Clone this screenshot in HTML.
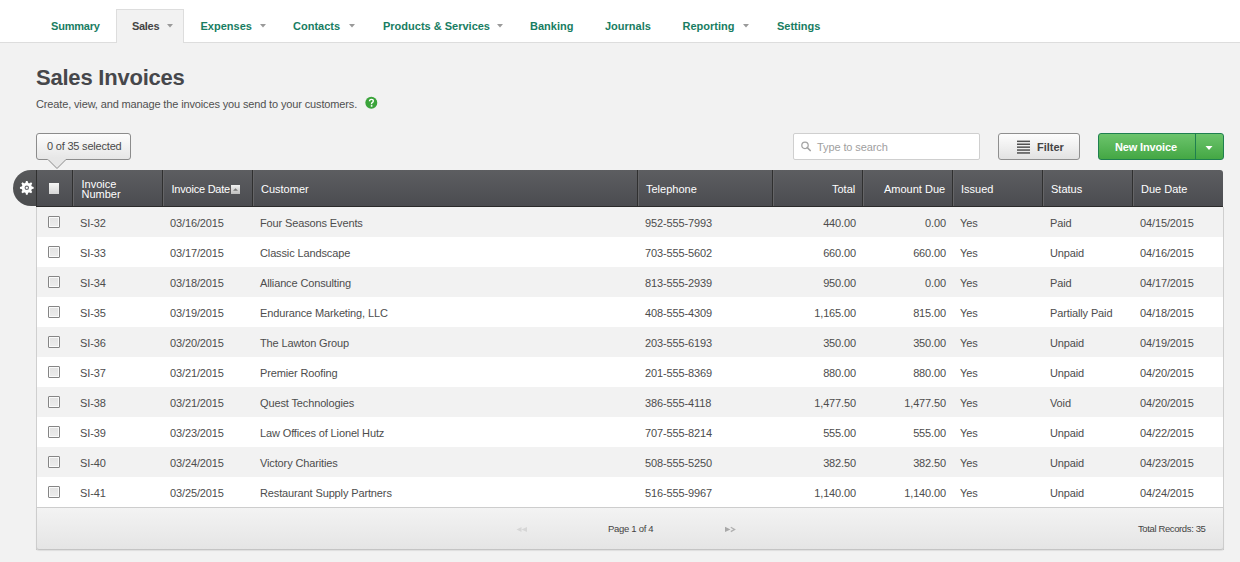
<!DOCTYPE html>
<html><head><meta charset="utf-8">
<style>
*{margin:0;padding:0;box-sizing:border-box}
html,body{width:1240px;height:562px;overflow:hidden;background:#f2f2f2;font-family:"Liberation Sans",sans-serif;color:#444;position:relative}
svg{position:absolute;display:block}
#nav{position:absolute;left:0;top:0;width:1240px;height:43px;background:#fff;border-bottom:1px solid #dddddd}
.nv{position:absolute;top:20px;font-size:11px;font-weight:bold;color:#187d62;white-space:nowrap;line-height:13px}
#tab{position:absolute;left:116px;top:9px;width:68px;height:34px;background:#f2f2f2;border:1px solid #dddddd;border-bottom:none}
h1{position:absolute;left:36px;top:65px;font-size:22px;font-weight:bold;color:#46474b;line-height:26px;white-space:nowrap;letter-spacing:-0.22px}
.sub{position:absolute;left:36px;top:98px;font-size:11px;color:#505050;line-height:13px;white-space:nowrap;letter-spacing:-0.14px}
#tip{position:absolute;left:36px;top:133px;width:95px;height:27px;border:1px solid #8c8c8c;border-radius:3px;background:linear-gradient(#fdfdfd,#e6e6e6);font-size:11px;line-height:13px;padding:6px 0 0 10px;color:#4a4a4a;white-space:nowrap;letter-spacing:-0.2px}
#search{position:absolute;left:793px;top:133px;width:187px;height:27px;border:1px solid #cfcfcf;border-radius:2px;background:#fff}
#search span{position:absolute;left:23px;top:7px;font-size:11px;color:#a0a0a0;line-height:13px;white-space:nowrap;letter-spacing:-0.1px}
#filter{position:absolute;left:998px;top:133px;width:82px;height:27px;border:1px solid #8f8f8f;border-radius:3px;background:linear-gradient(#fdfdfd,#e2e2e2)}
#filter span{position:absolute;left:38px;top:7px;font-size:11px;font-weight:bold;color:#444;line-height:13px}
#newinv{position:absolute;left:1098px;top:133px;width:126px;height:27px;border:1px solid #1f8050;border-radius:3px;background:linear-gradient(#6cc46c,#44a744)}
#newinv span{position:absolute;left:16px;top:7px;font-size:11px;font-weight:bold;color:#fff;line-height:13px;white-space:nowrap;letter-spacing:-0.15px}
#newinv .sp{position:absolute;left:96px;top:0;width:1px;height:25px;background:#1f7f4f}
#thead{position:absolute;left:36px;top:170px;width:1187px;height:37px;background:linear-gradient(#5d5e61,#4b4c50);border-bottom:1px solid #2a2a2a;border-top-right-radius:3px}
.gear{position:absolute;left:13px;top:170px;width:46px;height:36px;border-radius:18px;background:linear-gradient(#58595b,#4b4c4e)}
.hd{position:absolute;top:0;height:36px;width:2px;border-left:1px solid #303030;border-right:1px solid #656567}
.ht{position:absolute;top:13px;font-size:11px;color:#fff;line-height:13px;white-space:nowrap}
#tbody{position:absolute;left:36px;top:207px;width:1188px;height:343px;border-left:1px solid #cfcfcf;border-right:1px solid #cfcfcf}
.row{position:absolute;left:37px;width:1186px;height:30px}
.row .c{position:absolute;top:10px;font-size:11px;line-height:13px;color:#4d4d4d;white-space:nowrap;letter-spacing:-0.13px}
.row .c.r{text-align:right}
.odd{background:#f2f2f2}
.even{background:#fff}
.cb{position:absolute;left:11px;top:9px;width:12px;height:12px;border:1px solid #858585;border-radius:1px;background:linear-gradient(#e2e2e2,#ececec);box-shadow:inset 0 0 0 1px #fafafa}
#foot{position:absolute;left:36px;top:507px;width:1188px;height:43px;border:1px solid #cdcdcd;border-bottom-color:#c4c4c4;background:linear-gradient(#f3f3f3,#e5e5e5);border-radius:0 0 3px 3px;box-shadow:0 1px 1px rgba(0,0,0,0.08)}
.ft{position:absolute;font-size:9.5px;line-height:11px;color:#444;white-space:nowrap;letter-spacing:-0.3px}
</style></head><body>
<div id="nav">
  <div id="tab"></div>
  <span class="nv" style="left:51px;letter-spacing:-0.2px">Summary</span>
  <span class="nv" style="left:132px;color:#444;letter-spacing:-0.3px">Sales</span>
  <span class="nv" style="left:200.5px">Expenses</span>
  <span class="nv" style="left:293px">Contacts</span>
  <span class="nv" style="left:383px">Products &amp; Services</span>
  <span class="nv" style="left:530px">Banking</span>
  <span class="nv" style="left:605px">Journals</span>
  <span class="nv" style="left:682.5px">Reporting</span>
  <span class="nv" style="left:777px">Settings</span>
</div>
<svg style="left:0;top:0" width="1240" height="43">
  <g fill="#9a9a9a">
    <polygon points="167,24 173,24 170,27.5"/>
    <polygon points="260,24 266,24 263,27.5"/>
    <polygon points="349,24 355,24 352,27.5"/>
    <polygon points="497,24 503,24 500,27.5"/>
    <polygon points="743,24 749,24 746,27.5"/>
  </g>
</svg>
<h1>Sales Invoices</h1>
<div class="sub">Create, view, and manage the invoices you send to your customers.</div>
<svg style="left:364px;top:96px" width="15" height="15" viewBox="0 0 15 15">
  <circle cx="7.3" cy="6.8" r="6" fill="#3ba43b"/>
  <path d="M5.5 5.3 Q5.5 3.4 7.4 3.4 Q9.3 3.4 9.3 5.1 Q9.3 6.1 8.2 6.7 Q7.5 7.1 7.5 8.2" fill="none" stroke="#fff" stroke-width="1.4"/>
  <rect x="6.8" y="9.1" width="1.6" height="1.6" fill="#fff"/>
</svg>
<div id="tip">0 of 35 selected</div>
<svg style="left:46px;top:158px" width="24" height="12">
  <polygon points="1,1 20,1 11,10.5" fill="#e7e7e7"/>
  <polyline points="1.5,1 11,10.5 20.5,1" fill="none" stroke="#8c8c8c" stroke-width="1"/>
  <rect x="2" y="0" width="18" height="1.5" fill="#e7e7e7"/>
</svg>
<div id="search"><span>Type to search</span></div>
<svg style="left:798px;top:139px" width="16" height="16">
  <circle cx="7" cy="6.3" r="3.2" fill="none" stroke="#a3a3a3" stroke-width="1.25"/>
  <line x1="9.2" y1="8.5" x2="12.2" y2="11.5" stroke="#a3a3a3" stroke-width="1.7" stroke-linecap="round"/>
</svg>
<div id="filter"><span>Filter</span></div>
<svg style="left:1016px;top:140px" width="15" height="15">
  <g fill="#505050">
    <rect x="1" y="0.6" width="13" height="1.5"/>
    <rect x="1" y="3.5" width="13" height="1.5"/>
    <rect x="1" y="6.4" width="13" height="1.5"/>
    <rect x="1" y="9.3" width="13" height="1.5"/>
    <rect x="1" y="12.2" width="13" height="1.5"/>
  </g>
</svg>
<div id="newinv"><span>New Invoice</span><div class="sp"></div></div>
<svg style="left:1200px;top:140px" width="16" height="16"><polygon points="5.5,6 12.5,6 9,10" fill="#fff"/></svg>

<div id="tbody"></div>
<div class="row odd" style="top:207px"><div class="cb"></div><span class="c" style="left:43px">SI-32</span><span class="c" style="left:133px">03/16/2015</span><span class="c" style="left:223px">Four Seasons Events</span><span class="c" style="left:608px">952-555-7993</span><span class="c r" style="left:735px;width:84px">440.00</span><span class="c r" style="left:825px;width:84px">0.00</span><span class="c" style="left:923px">Yes</span><span class="c" style="left:1013px">Paid</span><span class="c" style="left:1103px">04/15/2015</span></div>
<div class="row even" style="top:237px"><div class="cb"></div><span class="c" style="left:43px">SI-33</span><span class="c" style="left:133px">03/17/2015</span><span class="c" style="left:223px">Classic Landscape</span><span class="c" style="left:608px">703-555-5602</span><span class="c r" style="left:735px;width:84px">660.00</span><span class="c r" style="left:825px;width:84px">660.00</span><span class="c" style="left:923px">Yes</span><span class="c" style="left:1013px">Unpaid</span><span class="c" style="left:1103px">04/16/2015</span></div>
<div class="row odd" style="top:267px"><div class="cb"></div><span class="c" style="left:43px">SI-34</span><span class="c" style="left:133px">03/18/2015</span><span class="c" style="left:223px">Alliance Consulting</span><span class="c" style="left:608px">813-555-2939</span><span class="c r" style="left:735px;width:84px">950.00</span><span class="c r" style="left:825px;width:84px">0.00</span><span class="c" style="left:923px">Yes</span><span class="c" style="left:1013px">Paid</span><span class="c" style="left:1103px">04/17/2015</span></div>
<div class="row even" style="top:297px"><div class="cb"></div><span class="c" style="left:43px">SI-35</span><span class="c" style="left:133px">03/19/2015</span><span class="c" style="left:223px">Endurance Marketing, LLC</span><span class="c" style="left:608px">408-555-4309</span><span class="c r" style="left:735px;width:84px">1,165.00</span><span class="c r" style="left:825px;width:84px">815.00</span><span class="c" style="left:923px">Yes</span><span class="c" style="left:1013px">Partially Paid</span><span class="c" style="left:1103px">04/18/2015</span></div>
<div class="row odd" style="top:327px"><div class="cb"></div><span class="c" style="left:43px">SI-36</span><span class="c" style="left:133px">03/20/2015</span><span class="c" style="left:223px">The Lawton Group</span><span class="c" style="left:608px">203-555-6193</span><span class="c r" style="left:735px;width:84px">350.00</span><span class="c r" style="left:825px;width:84px">350.00</span><span class="c" style="left:923px">Yes</span><span class="c" style="left:1013px">Unpaid</span><span class="c" style="left:1103px">04/19/2015</span></div>
<div class="row even" style="top:357px"><div class="cb"></div><span class="c" style="left:43px">SI-37</span><span class="c" style="left:133px">03/21/2015</span><span class="c" style="left:223px">Premier Roofing</span><span class="c" style="left:608px">201-555-8369</span><span class="c r" style="left:735px;width:84px">880.00</span><span class="c r" style="left:825px;width:84px">880.00</span><span class="c" style="left:923px">Yes</span><span class="c" style="left:1013px">Unpaid</span><span class="c" style="left:1103px">04/20/2015</span></div>
<div class="row odd" style="top:387px"><div class="cb"></div><span class="c" style="left:43px">SI-38</span><span class="c" style="left:133px">03/21/2015</span><span class="c" style="left:223px">Quest Technologies</span><span class="c" style="left:608px">386-555-4118</span><span class="c r" style="left:735px;width:84px">1,477.50</span><span class="c r" style="left:825px;width:84px">1,477.50</span><span class="c" style="left:923px">Yes</span><span class="c" style="left:1013px">Void</span><span class="c" style="left:1103px">04/20/2015</span></div>
<div class="row even" style="top:417px"><div class="cb"></div><span class="c" style="left:43px">SI-39</span><span class="c" style="left:133px">03/23/2015</span><span class="c" style="left:223px">Law Offices of Lionel Hutz</span><span class="c" style="left:608px">707-555-8214</span><span class="c r" style="left:735px;width:84px">555.00</span><span class="c r" style="left:825px;width:84px">555.00</span><span class="c" style="left:923px">Yes</span><span class="c" style="left:1013px">Unpaid</span><span class="c" style="left:1103px">04/22/2015</span></div>
<div class="row odd" style="top:447px"><div class="cb"></div><span class="c" style="left:43px">SI-40</span><span class="c" style="left:133px">03/24/2015</span><span class="c" style="left:223px">Victory Charities</span><span class="c" style="left:608px">508-555-5250</span><span class="c r" style="left:735px;width:84px">382.50</span><span class="c r" style="left:825px;width:84px">382.50</span><span class="c" style="left:923px">Yes</span><span class="c" style="left:1013px">Unpaid</span><span class="c" style="left:1103px">04/23/2015</span></div>
<div class="row even" style="top:477px"><div class="cb"></div><span class="c" style="left:43px">SI-41</span><span class="c" style="left:133px">03/25/2015</span><span class="c" style="left:223px">Restaurant Supply Partners</span><span class="c" style="left:608px">516-555-9967</span><span class="c r" style="left:735px;width:84px">1,140.00</span><span class="c r" style="left:825px;width:84px">1,140.00</span><span class="c" style="left:923px">Yes</span><span class="c" style="left:1013px">Unpaid</span><span class="c" style="left:1103px">04/24/2015</span></div>
<div id="foot">
  <span class="ft" style="left:571px;top:15px">Page 1 of 4</span>
  <span class="ft" style="left:1101px;top:15px;letter-spacing:-0.38px">Total Records: 35</span>
</div>
<svg style="left:510px;top:522px" width="240" height="14">
  <g fill="#d6d6d6"><polygon points="6.5,7.5 11.5,5 11.5,10"/><polygon points="11.5,7.5 17,5 17,10"/></g>
  <polygon points="215,4.8 215,10 220.5,7.4" fill="#a8a8a8"/>
  <polyline points="220.8,5.2 224.6,7.4 220.8,9.6" fill="none" stroke="#b0b0b0" stroke-width="1.3"/>
</svg>
<div class="gear"></div>
<svg style="left:17px;top:178px" width="20" height="20" viewBox="-9.8 -9.8 20 20">
  <path d="M-1.91 -4.62 L-1.21 -5.26 L-0.84 -6.85 L0.84 -6.85 L1.21 -5.26 L1.91 -4.62 L2.86 -4.58 L4.25 -5.44 L5.44 -4.25 L4.58 -2.86 L4.62 -1.91 L5.26 -1.21 L6.85 -0.84 L6.85 0.84 L5.26 1.21 L4.62 1.91 L4.58 2.86 L5.44 4.25 L4.25 5.44 L2.86 4.58 L1.91 4.62 L1.21 5.26 L0.84 6.85 L-0.84 6.85 L-1.21 5.26 L-1.91 4.62 L-2.86 4.58 L-4.25 5.44 L-5.44 4.25 L-4.58 2.86 L-4.62 1.91 L-5.26 1.21 L-6.85 0.84 L-6.85 -0.84 L-5.26 -1.21 L-4.62 -1.91 L-4.58 -2.86 L-5.44 -4.25 L-4.25 -5.44 L-2.86 -4.58Z" fill="#fff"/>
  <circle r="1.7" fill="none" stroke="#6a6b70" stroke-width="1.1"/>
</svg>
<div id="thead">
  <div style="position:absolute;left:0;top:0;width:1px;height:36px;background:#303030"></div>
  <div class="hd" style="left:36px"></div>
  <div class="hd" style="left:126px"></div>
  <div class="hd" style="left:216px"></div>
  <div class="hd" style="left:601px"></div>
  <div class="hd" style="left:736px"></div>
  <div class="hd" style="left:826px"></div>
  <div class="hd" style="left:916px"></div>
  <div class="hd" style="left:1006px"></div>
  <div class="hd" style="left:1096px"></div>
  <div style="position:absolute;left:13px;top:13px;width:10px;height:11px;background:linear-gradient(#f6f6f6,#d6d6d6)"></div>
  <span class="ht" style="left:45.5px;top:9px;line-height:10px">Invoice<br>Number</span>
  <span class="ht" style="left:135.5px;letter-spacing:-0.22px">Invoice Date</span>
  <div style="position:absolute;left:195px;top:15px;width:9px;height:9px;background:linear-gradient(#f2f2f2,#bdbdbd)"></div>
  <svg style="left:195px;top:15px" width="9" height="9"><polygon points="2,5.8 7,5.8 4.5,3.3" fill="#7a7a7a"/></svg>
  <span class="ht" style="left:225px">Customer</span>
  <span class="ht" style="left:610px">Telephone</span>
  <span class="ht" style="left:796px">Total</span>
  <span class="ht" style="left:848px">Amount Due</span>
  <span class="ht" style="left:925px">Issued</span>
  <span class="ht" style="left:1015px">Status</span>
  <span class="ht" style="left:1105px">Due Date</span>
</div>
</body></html>
